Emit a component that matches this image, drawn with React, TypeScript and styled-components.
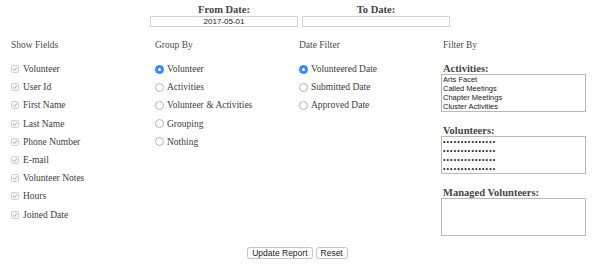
import React from "react";
import styled, { createGlobalStyle } from "styled-components";

const Global = createGlobalStyle`
  html, body { margin: 0; padding: 0; background: #fff; }
  body { font-family: "Liberation Serif", serif; color: #3d3d3d; }
`;

const Page = styled.div`
  width: 600px;
  padding-top: 4px;
`;

const DateRow = styled.div`
  display: flex;
  justify-content: center;
  gap: 4px;
`;

const DateField = styled.div`
  display: flex;
  flex-direction: column;
  align-items: center;
  width: 148px;
`;

const BoldLabel = styled.div`
  font-family: "Liberation Serif", serif;
  font-weight: bold;
  font-size: 10.5px;
  line-height: 11px;
  color: #444;
  white-space: nowrap;
`;

const DateLabel = styled(BoldLabel)`
  line-height: 12px;
`;

const DateInput = styled.div`
  box-sizing: border-box;
  width: 148px;
  height: 11px;
  border: 1px solid #d2d2d2;
  font-family: "Liberation Sans", sans-serif;
  font-size: 8px;
  line-height: 9px;
  text-align: center;
  color: #222;
`;

const Grid = styled.div`
  display: grid;
  grid-template-columns: repeat(4, 144px);
  padding-left: 11px;
  margin-top: 12px;
`;

const Column = styled.div`
  display: flex;
  flex-direction: column;
`;

const ColHeader = styled.div`
  font-size: 9.5px;
  line-height: 12px;
  color: #4a4a4a;
  margin-bottom: 9px;
`;

const OptionRow = styled.label`
  display: flex;
  align-items: center;
  height: 18.2px;
  font-size: 9.5px;
  color: #3d3d3d;
  white-space: nowrap;
`;

const CheckBox = styled.span`
  box-sizing: border-box;
  width: 8px;
  height: 8px;
  border: 1px solid #cfcfcf;
  border-radius: 1.5px;
  background: #f7f7f7;
  margin-right: 4px;
  display: flex;
  align-items: center;
  justify-content: center;
`;

const Radio = styled.span<{ $on?: boolean }>`
  box-sizing: border-box;
  width: 9px;
  height: 9px;
  border-radius: 50%;
  margin-right: 3px;
  display: flex;
  align-items: center;
  justify-content: center;
  background: ${(p) => (p.$on ? "#3b8ff6" : "#fff")};
  border: 1px solid ${(p) => (p.$on ? "#2f7fe6" : "#b4b4b4")};
  &::after {
    content: "";
    display: ${(p) => (p.$on ? "block" : "none")};
    width: 3px;
    height: 3px;
    border-radius: 50%;
    background: #fff;
  }
`;

const FilterGroup = styled.div<{ $first?: boolean }>`
  display: flex;
  flex-direction: column;
  margin-top: ${(p) => (p.$first ? "3px" : "13px")};
`;

const ListBox = styled.div`
  box-sizing: border-box;
  width: 145px;
  height: 38px;
  margin-left: -2px;
  border: 1px solid #b9b9b9;
  padding: 0 1px;
  font-family: "Liberation Sans", sans-serif;
  font-size: 7.5px;
  color: #222;
  overflow: hidden;
`;

const ListItem = styled.div<{ $dots?: boolean }>`
  height: 9px;
  line-height: 9px;
  white-space: nowrap;
  letter-spacing: ${(p) => (p.$dots ? "1.1px" : "0")};
  font-size: ${(p) => (p.$dots ? "7px" : "7.5px")};
`;

const ButtonRow = styled.div`
  display: flex;
  justify-content: center;
  gap: 3px;
  margin-top: 11px;
  padding-right: 5px;
`;

const Button = styled.button`
  box-sizing: border-box;
  height: 12px;
  padding: 0 4px;
  border: 1px solid #c6c6c6;
  border-radius: 3px;
  background: #fff;
  box-shadow: 0 0.5px 0.5px rgba(0, 0, 0, 0.08);
  font-family: "Liberation Sans", sans-serif;
  font-size: 8.5px;
  line-height: 10px;
  color: #222;
`;

const Check = () => (
  <svg width="6" height="6" viewBox="0 0 6 6">
    <path d="M1 3.2 L2.4 4.6 L5 1.4" fill="none" stroke="#9c9c9c" strokeWidth="0.9" />
  </svg>
);

const fields = [
  "Volunteer",
  "User Id",
  "First Name",
  "Last Name",
  "Phone Number",
  "E-mail",
  "Volunteer Notes",
  "Hours",
  "Joined Date",
];

const groups = ["Volunteer", "Activities", "Volunteer & Activities", "Grouping", "Nothing"];
const dates = ["Volunteered Date", "Submitted Date", "Approved Date"];
const activities = ["Arts Facet", "Called Meetings", "Chapter Meetings", "Cluster Activities"];
const dots = "•••••••••••••••";

export default function App() {
  return (
    <Page>
      <Global />
      <DateRow>
        <DateField>
          <DateLabel>From Date:</DateLabel>
          <DateInput>2017-05-01</DateInput>
        </DateField>
        <DateField>
          <DateLabel>To Date:</DateLabel>
          <DateInput />
        </DateField>
      </DateRow>
      <Grid>
        <Column>
          <ColHeader>Show Fields</ColHeader>
          {fields.map((f) => (
            <OptionRow key={f}>
              <CheckBox>
                <Check />
              </CheckBox>
              {f}
            </OptionRow>
          ))}
        </Column>
        <Column>
          <ColHeader>Group By</ColHeader>
          {groups.map((g, i) => (
            <OptionRow key={g}>
              <Radio $on={i === 0} />
              {g}
            </OptionRow>
          ))}
        </Column>
        <Column>
          <ColHeader>Date Filter</ColHeader>
          {dates.map((d, i) => (
            <OptionRow key={d}>
              <Radio $on={i === 0} />
              {d}
            </OptionRow>
          ))}
        </Column>
        <Column>
          <ColHeader>Filter By</ColHeader>
          <FilterGroup $first>
            <BoldLabel>Activities:</BoldLabel>
            <ListBox>
              {activities.map((a) => (
                <ListItem key={a}>{a}</ListItem>
              ))}
            </ListBox>
          </FilterGroup>
          <FilterGroup>
            <BoldLabel>Volunteers:</BoldLabel>
            <ListBox>
              {[0, 1, 2, 3].map((i) => (
                <ListItem key={i} $dots>
                  {dots}
                </ListItem>
              ))}
            </ListBox>
          </FilterGroup>
          <FilterGroup>
            <BoldLabel>Managed Volunteers:</BoldLabel>
            <ListBox />
          </FilterGroup>
        </Column>
      </Grid>
      <ButtonRow>
        <Button>Update Report</Button>
        <Button>Reset</Button>
      </ButtonRow>
    </Page>
  );
}
